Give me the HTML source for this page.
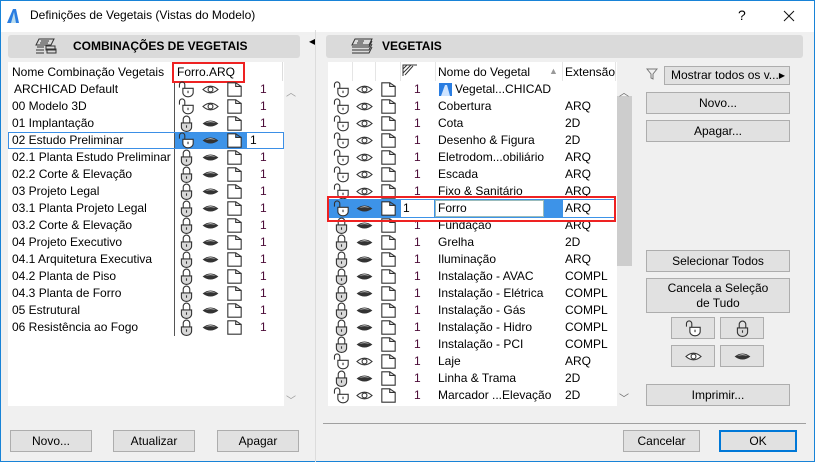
<!DOCTYPE html>
<html><head><meta charset="utf-8"><style>
*{box-sizing:border-box;margin:0;padding:0}
body{width:815px;height:462px;overflow:hidden;font-family:"Liberation Sans",sans-serif;font-size:12px;color:#000;background:#f0f0f0;position:relative}
.a{position:absolute}
.win{position:absolute;left:0;top:0;width:815px;height:462px;border:1px solid #1883d7}
.btn{position:absolute;background:#e1e1e1;border:1px solid #adadad;text-align:center;line-height:20px;font-size:12px}
.hdr{position:absolute;background:#dadada;border-radius:3px;font-weight:bold;font-size:12px;line-height:22px}
.row{position:absolute;height:17px;line-height:17px;white-space:nowrap}
.row span{position:absolute}
.n{color:#4a0a36}
svg.i{position:absolute;width:17px;height:17px}
</style></head><body>
<svg width="0" height="0" style="position:absolute">
<defs>
<symbol id="u" viewBox="0 0 14 14"><path d="M1.2 5.5V3A2.2 2.2 0 0 1 5.6 3V6" fill="none" stroke="#333" stroke-width="0.9"/><path d="M4 6H12.5V9.5A4.25 3.5 0 0 1 4 9.5Z" fill="#fff" stroke="#333" stroke-width="0.9"/><path d="M8.25 8V10" stroke="#333" stroke-width="0.9"/></symbol>
<symbol id="l" viewBox="0 0 14 14"><path d="M4.3 6.5V3.6A2.7 2.7 0 0 1 9.7 3.6V6.5" fill="none" stroke="#333" stroke-width="0.9"/><path d="M2.8 6.5H11.2V10A4.2 3.5 0 0 1 2.8 10Z" fill="#d8d8d8" stroke="#333" stroke-width="0.9"/><path d="M7 8.5V10.5" stroke="#333" stroke-width="0.9"/></symbol>
<symbol id="o" viewBox="0 0 14 14"><path d="M0.8 7Q7 1.5 13.2 7Q7 12.5 0.8 7Z" fill="#fff" stroke="#333" stroke-width="0.9"/><circle cx="7" cy="7" r="2" fill="none" stroke="#333" stroke-width="0.9"/></symbol>
<symbol id="c" viewBox="0 0 14 14"><path d="M0.5 7Q7 2 13.5 7Q7 12 0.5 7Z" fill="#333"/><path d="M2.5 6.6Q7 3.6 11.5 6.6Q7 5.2 2.5 6.6Z" fill="#ddd"/></symbol>
<symbol id="f" viewBox="0 0 14 14"><path d="M1.5 1.5H8V4.5H12.5V12.5H1.5Z" fill="#fff" stroke="#333" stroke-width="0.9"/><path d="M8 1.5L12.5 4.5" stroke="#333" stroke-width="0.9"/></symbol>
</defs></svg>
<div class="win"></div>
<div class="a" style="left:1px;top:1px;width:813px;height:31px;background:#fff"></div>
<svg class="a" style="left:7px;top:9px" width="12" height="14" viewBox="0 0 12 14"><path d="M0 14L6 0L9 0L12 14Z" fill="#2a7de1"/><path d="M4 14L7 3L9 14Z" fill="#bde"/></svg>
<div class="a" style="left:30px;top:8px;font-size:12px">Definições de Vegetais (Vistas do Modelo)</div>
<svg class="a" style="left:783px;top:10px" width="12" height="12"><path d="M1 1L11 11M11 1L1 11" stroke="#111"/></svg>
<div class="a" style="left:738px;top:7px;font-size:14px">?</div>
<div class="hdr" style="left:8px;top:35px;width:292px;height:23px;padding-left:65px">COMBINAÇÕES DE VEGETAIS</div>
<svg class="a" style="left:34px;top:38px" width="24" height="16" viewBox="0 0 24 16" fill="none" stroke="#333"><path d="M5 1H20L17 7H2Z M3 9H10 M2 12H10 M2 15H10"/><path d="M7 3h8M6 5h8"/><rect x="12" y="8" width="9" height="4"/><rect x="13" y="11" width="9" height="4"/></svg>
<div class="a" style="left:309px;top:37px;font-size:8px">◀</div>
<div class="a" style="left:315px;top:30px;width:1px;height:432px;background:#dcdcdc"></div>
<div class="a" style="left:8px;top:62px;width:276px;height:344px;background:#fff"></div>
<div class="a" style="left:284px;top:62px;width:16px;height:344px;background:#f0f0f0"></div>
<div class="a" style="left:286px;top:84px;color:#999;font-size:10px">︿</div>
<div class="a" style="left:286px;top:392px;color:#999;font-size:10px">﹀</div>
<div class="a" style="left:12px;top:65px">Nome Combinação Vegetais</div>
<div class="a" style="left:177px;top:65px">Forro.ARQ</div>
<div class="a" style="left:282px;top:62px;width:1px;height:19px;background:#ddd"></div>
<div class="a" style="left:172px;top:62px;width:73px;height:21px;border:2px solid #e22"></div>
<div class="a" style="left:174px;top:83px;width:1px;height:253px;background:#555"></div>
<div id="L"></div>
<div class="hdr" style="left:326px;top:35px;width:477px;height:23px;padding-left:56px">VEGETAIS</div>
<svg class="a" style="left:350px;top:38px" width="24" height="16" viewBox="0 0 24 16" fill="none" stroke="#333"><path d="M5 1H22L19 7H2Z M2 9H19L22 3 M2 12H19L22 6 M2 15H19L22 9"/><path d="M8 3h6M7 5h6"/></svg>
<div class="a" style="left:328px;top:62px;width:289px;height:344px;background:#fff"></div>
<div class="a" style="left:617px;top:62px;width:15px;height:344px;background:#f0f0f0"></div>
<div class="a" style="left:617px;top:96px;width:15px;height:170px;background:#cdcdcd"></div>
<div class="a" style="left:619px;top:84px;color:#666;font-size:10px">︿</div>
<div class="a" style="left:619px;top:390px;color:#666;font-size:10px">﹀</div>
<div class="a" style="left:352px;top:62px;width:1px;height:19px;background:#e5e5e5"></div>
<div class="a" style="left:375px;top:62px;width:1px;height:19px;background:#e5e5e5"></div>
<div class="a" style="left:400px;top:62px;width:1px;height:19px;background:#e5e5e5"></div>
<div class="a" style="left:435px;top:62px;width:1px;height:19px;background:#e5e5e5"></div>
<div class="a" style="left:562px;top:62px;width:1px;height:19px;background:#e5e5e5"></div>
<div class="a" style="left:615px;top:62px;width:1px;height:19px;background:#e5e5e5"></div>
<svg class="a" style="left:402px;top:64px" width="16" height="12" viewBox="0 0 16 12" fill="none" stroke="#333"><path d="M1 12V1H15M1 5L5 1M1 9L8 2M3 11L11 2M5 5L9 1"/></svg>
<div class="a" style="left:438px;top:65px">Nome do Vegetal</div>
<div class="a" style="left:549px;top:66px;color:#999;font-size:9px">▲</div>
<div class="a" style="left:565px;top:65px">Extensão</div>
<div id="R"></div>
<div class="a" style="left:327px;top:196px;width:289px;height:26px;border:2px solid #e22"></div>
<svg class="a" style="left:646px;top:68px" width="12" height="12" viewBox="0 0 12 12" fill="none" stroke="#777"><path d="M1 1H11L7 6V11L5 10V6Z"/></svg>
<div class="btn" style="left:664px;top:66px;width:126px;height:19px;line-height:17px;text-align:left;padding-left:6px">Mostrar todos os v... <span style="position:absolute;right:4px;font-size:8px">▶</span></div>
<div class="btn" style="left:646px;top:92px;width:144px;height:22px">Novo...</div>
<div class="btn" style="left:646px;top:120px;width:144px;height:22px">Apagar...</div>
<div class="btn" style="left:646px;top:250px;width:144px;height:22px">Selecionar Todos</div>
<div class="btn" style="left:646px;top:278px;width:144px;height:35px;line-height:15px;padding-top:2px">Cancela a Seleção<br>de Tudo</div>
<div class="btn" style="left:671px;top:317px;width:44px;height:22px"><svg class="i" style="left:13px;top:2px"><use href="#u"/></svg></div>
<div class="btn" style="left:720px;top:317px;width:44px;height:22px"><svg class="i" style="left:13px;top:2px"><use href="#l"/></svg></div>
<div class="btn" style="left:671px;top:345px;width:44px;height:22px"><svg class="i" style="left:13px;top:2px"><use href="#o"/></svg></div>
<div class="btn" style="left:720px;top:345px;width:44px;height:22px"><svg class="i" style="left:13px;top:2px"><use href="#c"/></svg></div>
<div class="btn" style="left:646px;top:384px;width:144px;height:22px">Imprimir...</div>
<div class="a" style="left:323px;top:423px;width:483px;height:1px;background:#a0a0a0"></div>
<div class="btn" style="left:623px;top:430px;width:77px;height:22px">Cancelar</div>
<div class="btn" style="left:719px;top:430px;width:78px;height:22px;border:2px solid #0078d7;line-height:18px">OK</div>
<div class="btn" style="left:10px;top:430px;width:82px;height:22px">Novo...</div>
<div class="btn" style="left:113px;top:430px;width:82px;height:22px">Atualizar</div>
<div class="btn" style="left:217px;top:430px;width:82px;height:22px">Apagar</div>
<script>
function ic(id,x){return '<svg class="i" style="left:'+x+'px;top:0px"><use href="#'+id+'"/></svg>';}
var L=[["ARCHICAD Default","u","o"],["00 Modelo 3D","u","o"],["01 Implantação","l","c"],["02 Estudo Preliminar","u","c"],["02.1 Planta Estudo Preliminar","l","c"],["02.2 Corte & Elevação","l","c"],["03 Projeto Legal","l","c"],["03.1 Planta Projeto Legal","l","c"],["03.2 Corte & Elevação","l","c"],["04 Projeto Executivo","l","c"],["04.1 Arquitetura Executiva","l","c"],["04.2 Planta de Piso","l","c"],["04.3 Planta de Forro","l","c"],["05 Estrutural","l","c"],["06 Resistência ao Fogo","l","c"]];
var h='';
L.forEach(function(r,i){var t=81+17*i;
if(i==3){h+='<div class="row" style="left:8px;top:'+t+'px;width:276px;border:1px solid #3b8fe6"></div><div class="a" style="left:175px;top:'+(t+1)+'px;width:72px;height:15px;background:#3d93e8"></div>';}
h+='<div class="row" style="left:0;top:'+t+'px;width:284px"><span style="left:'+(i==0?14:12)+'px">'+r[0]+'</span>'+ic(r[1],178)+ic(r[2],202)+ic('f',226)+'<span class="n" style="left:'+(i==3?250:260)+'px;'+(i==3?'color:#000':'')+'">1</span></div>';});
document.getElementById('L').innerHTML=h;
var R=[["Vegetal...CHICAD","","u","o"],["Cobertura","ARQ","u","o"],["Cota","2D","u","o"],["Desenho & Figura","2D","u","o"],["Eletrodom...obiliário","ARQ","u","o"],["Escada","ARQ","u","o"],["Fixo & Sanitário","ARQ","u","o"],["Forro","ARQ","u","c"],["Fundação","ARQ","l","c"],["Grelha","2D","l","c"],["Iluminação","ARQ","l","c"],["Instalação - AVAC","COMPL","l","c"],["Instalação - Elétrica","COMPL","l","c"],["Instalação - Gás","COMPL","l","c"],["Instalação - Hidro","COMPL","l","c"],["Instalação - PCI","COMPL","l","c"],["Laje","ARQ","u","o"],["Linha & Trama","2D","l","c"],["Marcador ...Elevação","2D","u","o"]];
h='';
R.forEach(function(r,i){var t=81+17*i;
if(i==7){h+='<div class="a" style="left:328px;top:'+(t-1)+'px;width:287px;height:19px;background:#3d93e8"></div><div class="a" style="left:401px;top:'+t+'px;width:33px;height:17px;background:#fff"></div><div class="a" style="left:435px;top:'+t+'px;width:109px;height:17px;background:#fff;border:1px solid #9bb"></div><div class="a" style="left:563px;top:'+t+'px;width:52px;height:17px;background:#fff"></div>';}
var nm=r[0];if(i==0)nm='<svg style="position:absolute;left:-16px;top:2px" width="13" height="13"><rect width="13" height="13" fill="#2a7de1"/><path d="M2 13L6 2L8 2L11 13Z" fill="#cfe4ff"/></svg>'+nm;
h+='<div class="row" style="left:0;top:'+t+'px;width:620px">'+ic(r[2],333)+ic(r[3],356)+ic('f',380)+'<span class="n" style="left:'+(i==7?403:414)+'px;'+(i==7?'color:#000':'')+'">1</span><span style="left:'+(i==0?455:438)+'px">'+nm+'</span><span style="left:565px">'+r[1]+'</span></div>';});
document.getElementById('R').innerHTML=h;
</script>
</body></html>
